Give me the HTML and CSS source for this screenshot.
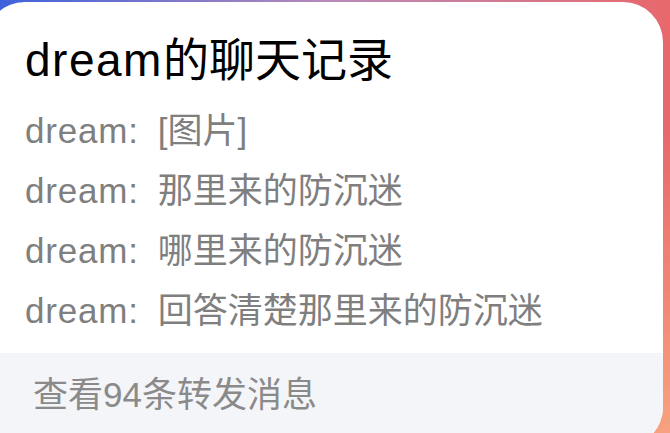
FILE: index.html
```html
<!DOCTYPE html>
<html>
  <head>
    <meta charset="utf-8">
    <meta name="viewport" content="width=device-width">
    <title>dream的聊天记录</title>
    <link rel="stylesheet" href="styles.css">
  </head>
  <body>
    <div class="card">
      <h1 class="title"><span class="latin">dream</span>的聊天记录</h1>
      <div class="messages">
        <p class="msg"><span class="name">dream:</span>[图片]</p>
        <p class="msg"><span class="name">dream:</span>那里来的防沉迷</p>
        <p class="msg"><span class="name">dream:</span>哪里来的防沉迷</p>
        <p class="msg"><span class="name">dream:</span>回答清楚那里来的防沉迷</p>
      </div>
      <div class="footer">查看94条转发消息</div>
    </div>
  </body>
</html>
```

FILE: styles.css
```css
html, body {
  height: 100%;
}
body {
  margin: 0;
  overflow: hidden;
  font-family: "Liberation Sans", "Noto Sans CJK SC", sans-serif;
  background:
    linear-gradient(160deg, rgba(247, 162, 126, 0) 55%, #f7a27e 100%),
    linear-gradient(to right, #3f63dc 0%, #b98ab8 50%, #e8686b 100%);
}
.card {
  margin: 2px 7px 0 -15px;
  height: 445px;
  background: #fff;
  border-radius: 40px;
  overflow: hidden;
  display: flex;
  flex-direction: column;
}
.title {
  margin: 0;
  padding: 30px 0 0 40px;
  font-size: 46px;
  line-height: 56px;
  font-weight: normal;
  color: #000;
}
.title .latin {
  letter-spacing: 1.5px;
}
.messages {
  padding: 13px 0 12px 40px;
}
.msg {
  margin: 0;
  font-size: 35px;
  line-height: 60px;
  color: #7f7f7f;
  white-space: nowrap;
}
.name {
  letter-spacing: 0.8px;
  margin-right: 19px;
}
.footer {
  flex: 1;
  background: #f4f5f9;
  padding: 22px 0 0 48px;
  font-size: 35px;
  line-height: 40px;
  color: #8a8a8a;
}
```
